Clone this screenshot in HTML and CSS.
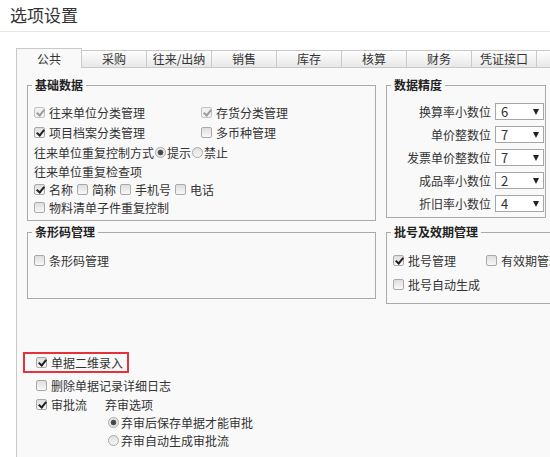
FILE: index.html
```html
<!DOCTYPE html>
<html lang="zh-CN">
<head>
    <meta charset="UTF-8">
    <meta name="viewport" content="width=device-width, initial-scale=1.0">
    <title>选项设置</title>
    <link rel="stylesheet" href="styles.css">
</head>
<body>
    <div class="title">选项设置</div>

    <div class="tabs">
        <div class="tab active">公共</div>
        <div class="tab">采购</div>
        <div class="tab">往来/出纳</div>
        <div class="tab">销售</div>
        <div class="tab">库存</div>
        <div class="tab">核算</div>
        <div class="tab">财务</div>
        <div class="tab">凭证接口</div>
        <div class="tab"></div>
    </div>

    <div class="panel">
        <div class="groups">
            <fieldset class="group basic">
                <legend>基础数据</legend>
                <div class="body">
                    <div class="row">
                        <label class="item col1"><span class="cb on dis"></span>往来单位分类管理</label>
                        <label class="item"><span class="cb on dis"></span>存货分类管理</label>
                    </div>
                    <div class="row">
                        <label class="item col1"><span class="cb on"></span>项目档案分类管理</label>
                        <label class="item"><span class="cb"></span>多币种管理</label>
                    </div>
                    <div class="row">
                        往来单位重复控制方式<span class="rd on"></span>提示<span class="rd"></span>禁止
                    </div>
                    <div class="row sm">往来单位重复检查项</div>
                    <div class="row sm">
                        <label class="item gap"><span class="cb on"></span>名称</label>
                        <label class="item gap"><span class="cb"></span>简称</label>
                        <label class="item gap"><span class="cb"></span>手机号</label>
                        <label class="item gap"><span class="cb"></span>电话</label>
                    </div>
                    <div class="row sm">
                        <label class="item"><span class="cb"></span>物料清单子件重复控制</label>
                    </div>
                </div>
            </fieldset>

            <fieldset class="group precision">
                <legend>数据精度</legend>
                <div class="body">
                    <div class="prow">换算率小数位<span class="sel">6</span></div>
                    <div class="prow">单价整数位<span class="sel">7</span></div>
                    <div class="prow">发票单价整数位<span class="sel">7</span></div>
                    <div class="prow">成品率小数位<span class="sel">2</span></div>
                    <div class="prow">折旧率小数位<span class="sel">4</span></div>
                </div>
            </fieldset>

            <fieldset class="group barcode">
                <legend>条形码管理</legend>
                <div class="body">
                    <div class="row">
                        <label class="item"><span class="cb"></span>条形码管理</label>
                    </div>
                </div>
            </fieldset>

            <fieldset class="group batch">
                <legend>批号及效期管理</legend>
                <div class="body">
                    <div class="row tall">
                        <label class="item bcol"><span class="cb on"></span>批号管理</label>
                        <label class="item"><span class="cb"></span>有效期管理</label>
                    </div>
                    <div class="row tall">
                        <label class="item"><span class="cb"></span>批号自动生成</label>
                    </div>
                </div>
            </fieldset>
        </div>

        <div class="extra">
            <label class="hl"><span class="cb on"></span>单据二维录入</label>
            <div class="row del">
                <label class="item"><span class="cb"></span>删除单据记录详细日志</label>
            </div>
            <div class="row sm">
                <label class="item"><span class="cb on"></span>审批流</label>
                <span class="sub">弃审选项</span>
            </div>
            <div class="row sm radio-row"><span class="rd on"></span>弃审后保存单据才能审批</div>
            <div class="row sm radio-row"><span class="rd"></span>弃审自动生成审批流</div>
        </div>
    </div>
</body>
</html>
```

FILE: styles.css
```css
* {
    box-sizing: border-box;
}
html, body {
    margin: 0;
    height: 457px;
    overflow: hidden;
}
body {
    font-family: "Noto Sans CJK SC", "Microsoft YaHei", sans-serif;
    font-size: 12px;
    color: #333;
    background: #fff;
}
.title {
    height: 32px;
    padding-left: 10px;
    font-size: 17px;
    line-height: 30px;
    border-bottom: 1px solid #e6e6e6;
}

/* tabs */
.tabs {
    display: flex;
    align-items: flex-end;
    height: 19px;
    margin: 16px 0 0 16px;
}
.tab {
    flex: 0 0 66px;
    height: 17px;
    margin-right: -1px;
    border: 1px solid #c9c9c9;
    border-bottom: 0;
    background: linear-gradient(#fefefe, #e7e7e7);
    text-align: center;
    line-height: 16px;
}
.tab.active {
    position: relative;
    height: 20px;
    margin-bottom: -1px;
    background: #f9f9f9;
    line-height: 19px;
}

.panel {
    height: 400px;
    margin-left: 16px;
    padding: 10px 0 0 10px;
    border-top: 1px solid #c9c9c9;
    border-left: 1px solid #c9c9c9;
    background: #f9f9f9;
}

/* groups */
.groups {
    display: grid;
    grid-template-columns: 349px 220px;
    column-gap: 10px;
    row-gap: 4px;
}
.group {
    margin: 0;
    padding: 0 6px;
    min-width: 0;
    border: 1px solid #aaa;
    align-self: start;
}
.group legend {
    margin-left: -2px;
    padding: 0 3px;
    line-height: 14px;
    font-weight: bold;
    color: #222;
}
.basic {
    height: 143px;
}
.basic .body {
    padding-top: 10px;
}
.precision {
    width: 160px;
    height: 140px;
    padding-right: 1px;
}
.precision .body {
    padding-top: 8px;
}
.barcode {
    height: 74px;
}
.barcode .body {
    padding-top: 11px;
}
.batch {
    height: 79px;
}
.batch .body {
    padding-top: 9px;
}

.row {
    display: flex;
    align-items: center;
    height: 20px;
    white-space: nowrap;
}
.row.sm {
    height: 18px;
}
.row.tall {
    height: 24px;
}
.item {
    display: inline-flex;
    align-items: center;
}
.col1 {
    width: 167px;
}
.bcol {
    width: 93px;
}
.gap {
    margin-right: 4px;
}

/* checkbox / radio */
.cb {
    position: relative;
    flex: none;
    width: 11px;
    height: 11px;
    margin-right: 4px;
    border: 1px solid #a9a9a9;
    border-radius: 2px;
    background: linear-gradient(#dedede, #f8f8f8);
}
.cb.on::after {
    content: "";
    position: absolute;
    left: 3px;
    top: 0;
    width: 3px;
    height: 6px;
    border: solid #222;
    border-width: 0 2px 2px 0;
    transform: rotate(40deg);
}
.cb.dis {
    border-color: #c4c4c4;
    background: #f1f1f1;
}
.cb.dis::after {
    border-color: #9c9c9c;
}
.rd {
    flex: none;
    width: 11px;
    height: 11px;
    margin: 0 1px;
    border: 1px solid #a9a9a9;
    border-radius: 50%;
    background: linear-gradient(#dedede, #f8f8f8);
}
.rd.on {
    background: radial-gradient(circle, #3c3c3c 0, #555 2.5px, #e4e4e4 3.2px, #f6f6f6 100%);
}

/* precision */
.prow {
    display: flex;
    justify-content: flex-end;
    align-items: center;
    gap: 4px;
    height: 23px;
}
.sel {
    display: flex;
    align-items: center;
    justify-content: space-between;
    width: 49px;
    height: 17px;
    padding: 0 4px 0 5px;
    border: 1px solid #a6a6a6;
    background: #fff;
    font-size: 13px;
    line-height: 15px;
}
.sel::after {
    content: "";
    border-left: 3.5px solid transparent;
    border-right: 3.5px solid transparent;
    border-top: 6px solid #222;
}

/* bottom options */
.extra {
    margin-top: 48px;
    padding-left: 9px;
}
.hl {
    display: inline-flex;
    align-items: center;
    height: 21px;
    margin-left: -13px;
    padding: 0 4px 0 11px;
    border: 2px solid #e5323a;
}
.row.del {
    margin-top: 2px;
}
.sub {
    margin-left: 18px;
}
.radio-row {
    padding-left: 72px;
}
.radio-row .rd {
    margin: 0 2px 0 0;
}
```
